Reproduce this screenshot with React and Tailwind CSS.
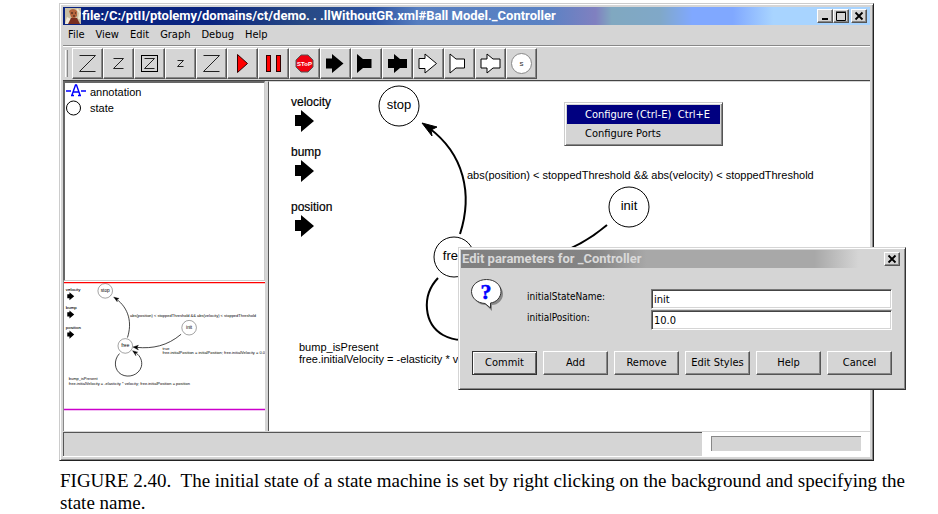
import React from "react";

const raised =
  "border border-t-white border-l-white border-r-[#555] border-b-[#555] bg-[#d5d5d5] shadow-[inset_-1px_-1px_0_#888]";

const ui = "font-['DejaVu_Sans_Condensed','DejaVu_Sans',sans-serif]";

const arrowRight = "6,10.5 12,10.5 12,6 23.5,15.5 12,25 12,20.5 6,20.5";
const arrowNotch = "6,6 12,11 20.5,11 20.5,20 12,20 6,25";
const arrowBoth =
  "6,11 12,11 12,6 18,11 25,11 25,20 18,20 12,25 12,20 6,20";

function Zed({ x, y, size }) {
  return (
    <polyline
      points={`${x},${y} ${x + size},${y} ${x},${y + size} ${x + size},${y + size}`}
      fill="none"
      stroke="#222"
      strokeWidth="1"
    />
  );
}

const tools = [
  { name: "Zoom in", icon: <Zed x={7.5} y={7.5} size={16} /> },
  { name: "Zoom reset", icon: <Zed x={10.5} y={10.5} size={10} /> },
  {
    name: "Zoom fit",
    icon: (
      <>
        <rect x="7.5" y="7.5" width="16" height="16" fill="none" stroke="#000" />
        <Zed x={10.5} y={10.5} size={10} />
      </>
    ),
  },
  { name: "Zoom out", icon: <Zed x={12.5} y={12.5} size={6} /> },
  { name: "Full screen", icon: <Zed x={7.5} y={7.5} size={16} /> },
  {
    name: "Run",
    icon: <polygon points="10.5,6.5 20.5,15.5 10.5,24.5" fill="#f00" stroke="#300" />,
  },
  {
    name: "Pause",
    icon: (
      <g fill="#f00" stroke="#300">
        <rect x="8.5" y="7.5" width="4" height="16" />
        <rect x="18.5" y="7.5" width="4" height="16" />
      </g>
    ),
  },
  {
    name: "Stop",
    icon: (
      <>
        <polygon
          points="12,7 19,7 24,12 24,19 19,24 12,24 7,19 7,12"
          fill="#f00010"
          stroke="#555"
        />
        <text
          x="15.5"
          y="18"
          textAnchor="middle"
          fontSize="6"
          fontWeight="bold"
          fill="#fff"
          fontFamily="Liberation Sans, sans-serif"
        >
          SToP
        </text>
      </>
    ),
  },
  { name: "Input port", icon: <polygon points={arrowRight} /> },
  { name: "Output port", icon: <polygon points={arrowNotch} /> },
  { name: "Input/output port", icon: <polygon points={arrowBoth} /> },
  {
    name: "Input multiport",
    icon: <polygon points={arrowRight} fill="#fff" stroke="#000" />,
  },
  {
    name: "Output multiport",
    icon: <polygon points={arrowNotch} fill="#fff" stroke="#000" />,
  },
  {
    name: "Input/output multiport",
    icon: <polygon points={arrowBoth} fill="#fff" stroke="#000" />,
  },
  {
    name: "New state",
    icon: (
      <>
        <circle cx="15.5" cy="15.5" r="10" fill="#fff" stroke="#888" />
        <text
          x="15.5"
          y="18"
          textAnchor="middle"
          fontSize="8"
          fill="#333"
          fontFamily="Liberation Sans, sans-serif"
        >
          s
        </text>
      </>
    ),
  },
];

const ports = [
  { label: "velocity", y: 24 },
  { label: "bump", y: 74 },
  { label: "position", y: 129 },
];

const states = [
  { label: "stop", x: 130, y: 24 },
  { label: "free", x: 185, y: 175 },
  { label: "init", x: 360, y: 125 },
];

function Diagram() {
  return (
    <g fontFamily="Liberation Sans, Arial, sans-serif" fill="#000">
      {ports.map((p) => (
        <g key={p.label}>
          <text x="22" y={p.y} fontSize="12" stroke="#000" strokeWidth="0.2">
            {p.label}
          </text>
          <polygon
            points="0,5 6,5 6,0 19,11 6,22 6,16 0,16"
            transform={`translate(26 ${p.y + 4})`}
          />
        </g>
      ))}
      <g fill="none" stroke="#000" strokeWidth="2">
        <path d="M191 152 C204 112 195 72 160 46" />
        <path d="M338 143 C300 175 260 183 216 179" />
        <path d="M169 196 C152 214 155 242 174 253 C194 264 222 255 229 232 C233 217 226 202 215 195" />
      </g>
      <polygon points="153,41 168,45 162,48 163,54" stroke="#000" />
      <polygon points="206,178 221,173 217,179 221,186" stroke="#000" />
      <polygon points="205,188 219,192 213,195 214,202" stroke="#000" />
      {states.map((s) => (
        <g key={s.label}>
          <circle cx={s.x} cy={s.y} r="20" fill="#fff" stroke="#000" />
          <text x={s.x} y={s.y + 3} textAnchor="middle" fontSize="13">
            {s.label}
          </text>
        </g>
      ))}
      <g fontSize="11">
        <text x="198" y="97">
          {"abs(position) < stoppedThreshold && abs(velocity) < stoppedThreshold"}
        </text>
        <text x="287" y="186">
          true
        </text>
        <text x="287" y="198">
          free.initialPosition = initialPosition; free.initialVelocity = 0.0
        </text>
        <text x="30" y="269">
          bump_isPresent
        </text>
        <text x="30" y="281">
          free.initialVelocity = -elasticity * velocity; free.initialPosition = position
        </text>
      </g>
    </g>
  );
}

function CaptionButton({ label, children }) {
  return (
    <button aria-label={label} className={`flex h-[14px] w-4 items-center justify-center ${raised}`}>
      <svg width="10" height="10" viewBox="0 0 10 10" fill="none" stroke="#000">
        {children}
      </svg>
    </button>
  );
}

const cross = <path d="M1.5 1.5 L8.5 8.5 M8.5 1.5 L1.5 8.5" strokeWidth="1.8" />;

function TitleBar() {
  return (
    <header className="flex h-[18px] items-center bg-[linear-gradient(90deg,#0a2480_0%,#0a2480_18%,#284a84_30%,#2a50a0_38%,#567ec0_44%,#5a82c4_60%,#8080c0_66%,#80a8c0_68%,#80a8c8_74%,#80a8ff_78%,#80a8ff_83%,#a8d4ff_88%,#a8d4ff_100%)] pr-[3px] pl-[2px]">
      <svg width="16" height="16" viewBox="0 0 16 16" className="shrink-0" aria-hidden="true">
        <rect width="16" height="16" fill="#c9bfa4" />
        <path d="M0 16 L2 9 L6 11 L8 16 Z" fill="#f2ead8" />
        <path d="M4 3 Q8 -1 12 3 L12 8 Q9 12 6 9 Z" fill="#b5643c" />
        <path d="M3 16 L6 10 L12 10 L15 16 Z" fill="#7a2f20" />
        <path d="M6 5 h2 M10 5 h1 M8 8 h2" stroke="#2c1a14" />
        <path d="M12 1 L15 5 L14 11" stroke="#efe6cf" fill="none" strokeWidth="2" />
      </svg>
      <h1 className="min-w-0 flex-1 truncate pl-px text-[13px] leading-[18px] font-bold text-white font-[Roboto,sans-serif]">
        file:/C:/ptII/ptolemy/domains/ct/demo. . .llWithoutGR.xml#Ball Model._Controller
      </h1>
      <CaptionButton label="Minimize">
        <path d="M2 8 H8" strokeWidth="2" />
      </CaptionButton>
      <CaptionButton label="Maximize">
        <path d="M0.5 1.5 H9.5 V9.5 H0.5 Z M0 1 H10" />
      </CaptionButton>
      <div className="w-[2px]" />
      <CaptionButton label="Close">{cross}</CaptionButton>
    </header>
  );
}

function ContextMenu() {
  return (
    <div
      role="menu"
      className="absolute top-[20px] left-[295px] w-[159px] border border-t-[#ccc] border-l-[#ccc] border-r-[#555] border-b-[#555] bg-[#d5d5d5] p-[2px] text-[11px] leading-[19px] shadow-[inset_1px_1px_0_#fff,inset_-1px_-1px_0_#888]"
    >
      <button role="menuitem" className="flex w-full bg-[#000080] pr-[10px] pl-[18px] whitespace-nowrap text-white">
        <span className="flex-1 text-left">Configure (Ctrl-E)</span>
        <span>Ctrl+E</span>
      </button>
      <button role="menuitem" className="block w-full pl-[18px] text-left whitespace-nowrap">
        Configure Ports
      </button>
    </div>
  );
}

const fields = [
  { id: "initialStateName", value: "init" },
  { id: "initialPosition", value: "10.0" },
];

function Dialog() {
  return (
    <section
      role="dialog"
      aria-labelledby="dialog-title"
      className="absolute top-[244px] left-[399px] w-[448px] border border-t-[#d5d5d5] border-l-[#d5d5d5] border-r-[#333] border-b-[#333] bg-[#d5d5d5] p-[2px] pb-[14px] shadow-[inset_1px_1px_0_#fff,inset_-1px_-1px_0_#888]"
    >
      <header className="flex h-[18px] items-center bg-[linear-gradient(90deg,#808080_0%,#848484_30%,#a8a8a8_42%,#a8a8a8_80%,#d5d5d5_90%)] pr-[3px]">
        <h2
          id="dialog-title"
          className="flex-1 pl-px text-[13px] leading-[18px] font-bold text-[#d9d9d9] font-[Roboto,sans-serif]"
        >
          Edit parameters for _Controller
        </h2>
        <CaptionButton label="Close dialog">{cross}</CaptionButton>
      </header>
      <div className="flex pt-[11px] pr-[11px] pl-[10px]">
        <svg width="32" height="32" viewBox="0 0 32 32" className="shrink-0" aria-hidden="true">
          <path
            d="M17 3 C26 3 32 8 32 15 C32 21 27 26 21 26 L21 32 L15 26 C7 26 3 21 3 15 C3 8 9 3 17 3Z"
            fill="#888"
          />
          <path
            d="M15.5 0.5 C24 0.5 30 6 30 12.5 C30 18.5 25 23.5 19.5 24 L19.5 29 L14 24.5 C6 24 0.5 19 0.5 12.5 C0.5 6 7 0.5 15.5 0.5Z"
            fill="#fff"
            stroke="#333"
          />
          <text
            x="15"
            y="20"
            textAnchor="middle"
            fontFamily="Liberation Serif, serif"
            fontWeight="bold"
            fontSize="22"
            fill="#00f"
            stroke="#00f"
            strokeWidth="0.5"
          >
            ?
          </text>
        </svg>
        <div className="flex flex-1 flex-col gap-px pt-[10px] pl-6">
          {fields.map((f) => (
            <div key={f.id} className="flex">
              <label htmlFor={f.id} className="w-[124px] text-[10px] leading-4">
                {f.id}:
              </label>
              <input
                id={f.id}
                defaultValue={f.value}
                className="h-[20px] min-w-0 flex-1 border border-t-[#777] border-l-[#777] border-r-white border-b-white bg-white pl-[2px] text-[11px] shadow-[inset_1px_1px_0_#444,inset_-1px_-1px_0_#d5d5d5]"
              />
            </div>
          ))}
        </div>
      </div>
      <div className="flex gap-[6px] pt-[21px] pr-[11px] pl-[11px] text-[11px]">
        <button className="h-6 flex-1 border border-[#333] bg-[#d5d5d5] whitespace-nowrap shadow-[inset_1px_1px_0_#fff,inset_-1px_-1px_0_#666]">
          Commit
        </button>
        {["Add", "Remove", "Edit Styles", "Help", "Cancel"].map((b) => (
          <button key={b} className={`h-6 flex-1 whitespace-nowrap ${raised}`}>
            {b}
          </button>
        ))}
      </div>
    </section>
  );
}

export default function App() {
  return (
    <main className={`min-h-screen bg-white pt-[3px] pr-16 pl-[59px] text-black ${ui}`}>
      <div className="relative">
        <div className="border border-t-[#ccc] border-l-[#ccc] border-r-[#222] border-b-[#222] bg-[#d5d5d5] p-[3px] shadow-[inset_1px_1px_0_#fff,inset_-1px_-1px_0_#888]">
          <TitleBar />
          <nav className="flex h-[21px] items-center gap-[11px] border-b border-[#888] pl-[5px] text-[11px]">
            {["File", "View", "Edit", "Graph", "Debug", "Help"].map((m) => (
              <button key={m}>{m}</button>
            ))}
          </nav>
          <div className="flex border-t border-b border-t-white border-b-[#444] py-px pl-[2px]">
            <div className="my-[2px] mr-[4px] w-[3px] border-r border-l border-l-white border-r-[#888]" />
            {tools.map((t) => (
              <button key={t.name} aria-label={t.name} className={`size-[31px] ${raised}`}>
                <svg width="31" height="31" viewBox="0 0 31 31" className="-m-px block max-w-none">
                  {t.icon}
                </svg>
              </button>
            ))}
          </div>
          <div className="flex h-[350px]">
            <aside className="flex w-[202px] shrink-0 flex-col">
              <ul className="h-[200px] border-t-2 border-r border-b border-l-2 border-t-[#666] border-r-[#ccc] border-b-[#ccc] border-l-[#666] bg-white pt-px pl-px text-[11px] leading-4 font-['Liberation_Sans',Arial,sans-serif]">
                <li className="flex items-center gap-1">
                  <svg width="20" height="16" viewBox="0 0 20 16" aria-hidden="true">
                    <path
                      d="M0 7 H5 M15 7 H20 M6 11 L9.5 1 H10.5 L14 11 M7 8 H13 M5 11.5 H8 M12 11.5 H15"
                      fill="none"
                      stroke="#00f"
                      strokeWidth="1.4"
                    />
                  </svg>
                  annotation
                </li>
                <li className="flex items-center gap-1">
                  <svg width="20" height="16" viewBox="0 0 20 16" aria-hidden="true">
                    <circle cx="7.5" cy="8" r="7" fill="#fff" stroke="#000" />
                  </svg>
                  state
                </li>
              </ul>
              <div className="flex-1 border-l border-[#888] bg-white">
                <svg width="100%" height="150" viewBox="17 -3 551 411" preserveAspectRatio="xMinYMin meet">
                  <Diagram />
                  <path d="M17 1.5 H572" stroke="#f00" strokeWidth="4" />
                  <path d="M17 349 H572" stroke="#c0c" strokeWidth="4" />
                </svg>
              </div>
            </aside>
            <div className="w-[3px] shrink-0" />
            <section className="relative min-w-0 flex-1 border-t border-l border-t-[#d5d5d5] border-l-[#555] bg-white">
              <svg width="100%" height="349" className="block">
                <Diagram />
              </svg>
              <ContextMenu />
            </section>
          </div>
          <footer className="flex h-[26px] border-t border-b border-t-[#d5d5d5] border-b-white bg-white">
            <div className="w-[639px] shrink-0 border-t border-l border-[#555] bg-[#d5d5d5]" />
            <div className="mt-1 mr-[9px] mb-[5px] ml-[9px] flex-1 border-t border-l border-[#888] bg-[#d5d5d5]" />
          </footer>
        </div>
        <Dialog />
      </div>
      <p className="-mr-10 pt-[9px] pl-px text-[19px] leading-[22px] whitespace-pre-wrap font-['Liberation_Serif',serif]">
        FIGURE 2.40.{"  "}The initial state of a state machine is set by right clicking on the background and
        specifying the state name.
      </p>
    </main>
  );
}
